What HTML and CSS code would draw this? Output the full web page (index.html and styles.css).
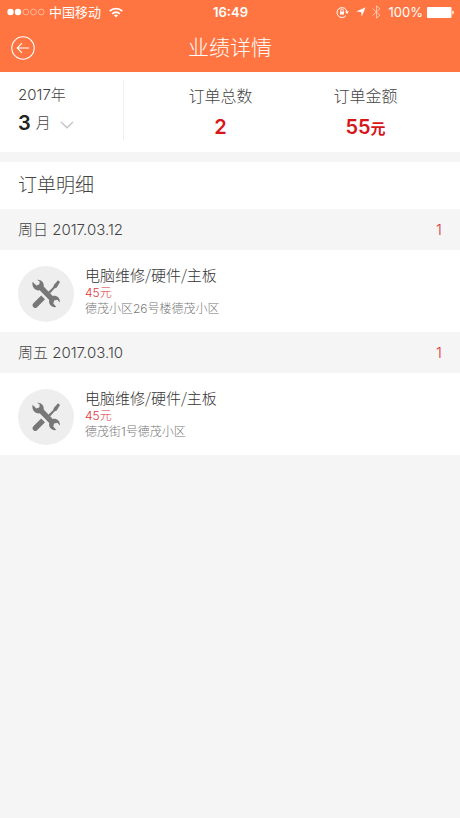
FILE: index.html
```html
<!DOCTYPE html>
<html lang="zh-CN">
<head>
<meta charset="utf-8">
<meta name="viewport" content="width=device-width, initial-scale=1">
<title>业绩详情</title>
<link rel="stylesheet" href="styles.css">
</head>
<body>
<svg class="defs" aria-hidden="true">
  <symbol id="tools" viewBox="0 0 30 30">
    <path d="M27 1.2 29 3l-3.2 5.6-2.3 1-4.5 4.8-1.7-1.7 4.7-4.4 1-2.6z"/>
    <path d="M10.2 16.5 14 20.2l-7.6 7.9a2.7 2.7 0 0 1-4-3.8z"/>
    <path d="M1.6 2.7 5.3 6.4 8.2 5.5 8.8 2.7 6.2.7C10 .2 13.4 3.3 12.7 7.6L21.7 17c4-.8 7.5 2 7.3 6.5l-2.7-2.8-3.2.8-.8 3 3 3.5c-4.6.9-8-2.8-7.1-7L8.7 11.3C4.5 12 .4 8.4 1.6 2.7z"/>
  </symbol>
</svg>
<header class="top">
  <div class="status">
    <div class="status-side">
      <svg class="signal" viewBox="0 0 38 8" aria-hidden="true"><g fill="#fff"><circle cx="3.5" cy="4" r="3.2"/><circle cx="11" cy="4" r="3.2"/></g><g fill="none" stroke="#ffc5ad" stroke-width=".8"><circle cx="18.8" cy="4" r="2.9"/><circle cx="26.5" cy="4" r="2.9"/><circle cx="34.2" cy="4" r="2.9"/></g></svg>
      <span>中国移动</span>
      <svg class="wifi" viewBox="0 0 14 11" fill="none" stroke="#fff" stroke-width="1.8" aria-hidden="true"><path d="M.7 4.1a9 9 0 0 1 12.6 0M3.2 6.8a5.4 5.4 0 0 1 7.6 0"/><path d="M7 10.5 5 8.5a2.8 2.8 0 0 1 4 0z" fill="#fff" stroke="none"/></svg>
    </div>
    <time class="clock">16:49</time>
    <div class="status-side status-end">
      <svg class="lock" viewBox="0 0 13 12" fill="none" stroke="#fff" aria-hidden="true"><path d="M10 9.6A5 5 0 1 1 11 6" stroke-width="1"/><path d="M9 5.5h4l-2 2.4z" fill="#fff" stroke="none"/><path d="M4 5.5h4v3H4z" fill="#fff" stroke="none"/><path d="M4.7 5.6V4.3a1.3 1.3 0 0 1 2.6 0v1.3" stroke-width=".9"/></svg>
      <svg class="arrow" viewBox="0 0 10 10" aria-hidden="true"><path d="M9.7.3 5.7 9.5 5.2 4.9.3 4.5z" fill="#fff"/></svg>
      <svg class="bluetooth" viewBox="0 0 9 14" fill="none" stroke="#ffc5ad" aria-hidden="true"><path d="m.7 3.7 7.2 6.5-3.4 3V.8l3.4 3L.7 10.3"/></svg>
      <span class="percent">100%</span>
      <svg class="battery" viewBox="0 0 27 11" fill="#fff" aria-hidden="true"><rect width="24.5" height="11" rx="1"/><path d="M25.3 3.5c2 .7 2 3.3 0 4z"/></svg>
    </div>
  </div>
  <div class="nav">
    <button class="back" type="button" aria-label="返回"><svg viewBox="0 0 24 24" fill="none" stroke="#fff" stroke-width="1.1"><circle cx="12" cy="12" r="11.2"/><path d="M18 12H6.5M11 7.2 6.2 12l4.8 4.8"/></svg></button>
    <h1>业绩详情</h1>
  </div>
</header>
<main>
  <section class="summary">
    <button class="period" type="button">
      <span class="year">2017年</span>
      <span class="month"><b>3</b><span>月</span><svg viewBox="0 0 14 8" fill="none" stroke="#c4c4c4" stroke-width="1.4" aria-hidden="true"><path d="m1 1 6 5.7L13 1"/></svg></span>
    </button>
    <dl class="stats">
      <div><dt>订单总数</dt><dd>2</dd></div>
      <div><dt>订单金额</dt><dd>55<small>元</small></dd></div>
    </dl>
  </section>
  <section class="orders">
    <h2>订单明细</h2>
    <h3><span>周日 2017.03.12</span><span class="count">1</span></h3>
    <article>
      <span class="avatar"><svg aria-hidden="true"><use href="#tools"/></svg></span>
      <div><h4>电脑维修/硬件/主板</h4><p class="price">45元</p><p class="address">德茂小区26号楼德茂小区</p></div>
    </article>
    <h3><span>周五 2017.03.10</span><span class="count">1</span></h3>
    <article>
      <span class="avatar"><svg aria-hidden="true"><use href="#tools"/></svg></span>
      <div><h4>电脑维修/硬件/主板</h4><p class="price">45元</p><p class="address">德茂街1号德茂小区</p></div>
    </article>
  </section>
</main>
</body>
</html>
```
FILE: styles.css
```css
* { box-sizing: border-box; margin: 0; padding: 0; }
body {
  background: #f5f5f5;
  color: #444;
  font-family: Inter, "Noto Sans CJK SC", sans-serif;
  font-weight: 300;
}
button { border: 0; background: none; color: inherit; font: inherit; text-align: left; cursor: pointer; }
svg { display: block; flex: none; }
.defs { position: absolute; width: 0; height: 0; }

.top { background: #ff7542; color: #fff; }
.status { display: flex; align-items: center; height: 24px; padding: 0 6px 0 7px; font-size: 13px; line-height: 24px; }
.status-side { display: flex; flex: 1; align-items: center; gap: 4px; font-weight: 400; }
.status-end { justify-content: flex-end; }
.signal { width: 38px; height: 8px; }
.wifi { width: 14px; height: 11px; margin-left: 4px; }
.clock { font-weight: 600; }
.lock { width: 13px; height: 12px; }
.arrow { width: 10px; height: 10px; margin-left: 3px; }
.bluetooth { width: 9px; height: 14px; margin: 0 4px 0 2px; }
.battery { width: 27px; height: 11px; }
.nav { display: grid; grid-template-columns: 24px 1fr 24px; align-items: center; height: 48px; padding: 0 11px; }
.back svg { width: 24px; height: 24px; }
h1 { font-size: 21px; line-height: 44px; font-weight: 300; text-align: center; }

.summary { display: flex; align-items: flex-start; min-height: 80px; padding: 8px 0 4px 18px; background: #fff; }
.period { width: 106px; height: 60px; padding-bottom: 3px; border-right: 1px solid #eee; }
.year { display: block; font-size: 15px; line-height: 28px; }
.month { display: flex; align-items: center; font-size: 15px; line-height: 28px; }
.month b { margin-right: 5px; color: #222; font-size: 20px; font-weight: 600; }
.month svg { width: 14px; height: 8px; margin: 4px 0 0 9px; }
.stats { display: flex; flex: 1; justify-content: space-around; padding: 2px 22px 0 24px; text-align: center; }
dt { font-size: 16px; line-height: 28px; }
dd { color: #d7161b; font-size: 20px; font-weight: 600; line-height: 34px; }
dd small { font-size: 15px; }

.orders { margin-top: 10px; background: #fff; }
h2 { padding: 0 18px; font-size: 19px; font-weight: 300; line-height: 47px; }
h3 { display: flex; justify-content: space-between; padding: 0 18px; background: #f5f5f5; font-size: 15px; font-weight: 300; line-height: 41px; }
.count { color: #e0353b; }
article { display: flex; gap: 11px; height: 82px; padding: 16px 18px; }
.avatar { display: grid; place-items: center; width: 56px; height: 56px; border-radius: 50%; background: #eee; }
.avatar svg { width: 30px; height: 30px; fill: #777; }
h4 { color: #333; font-family: "Noto Sans CJK SC", sans-serif; font-size: 15px; font-weight: 300; line-height: 18px; }
.price { color: #e0353b; font-size: 12px; line-height: 18px; }
.address { color: #777; font-size: 12px; line-height: 14px; }
```
